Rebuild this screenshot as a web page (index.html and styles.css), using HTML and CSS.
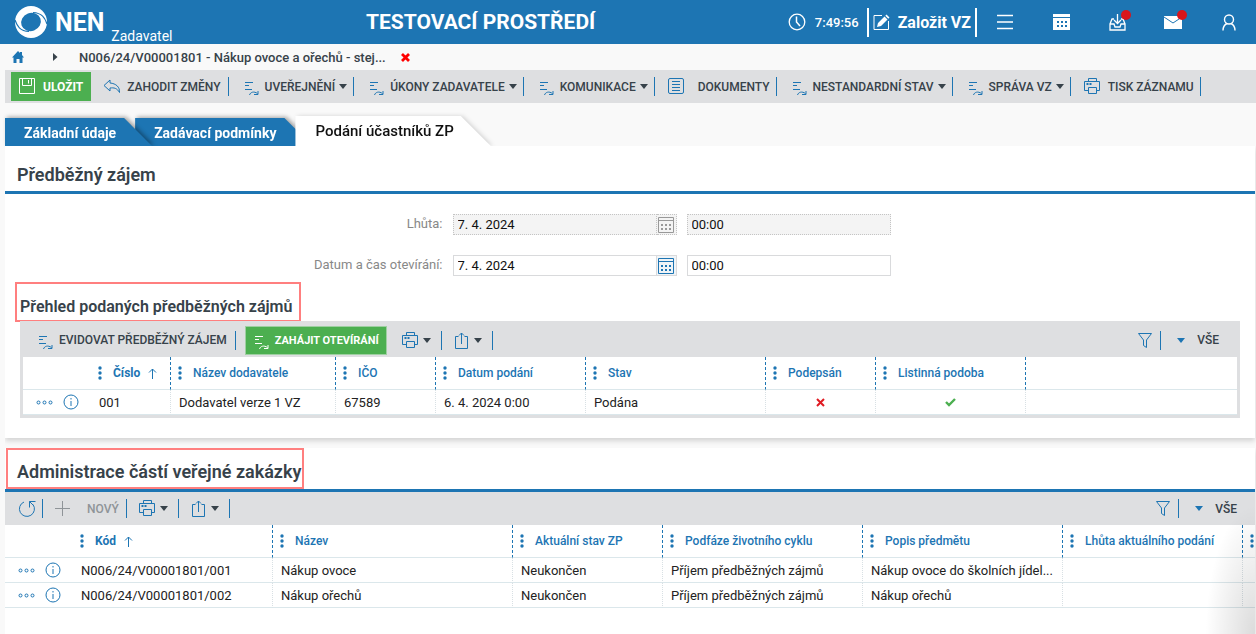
FILE: index.html
```html
<!DOCTYPE html>
<html lang="cs">
<head>
  <meta charset="UTF-8" />
  <meta name="viewport" content="width=device-width, initial-scale=1.0"/>
  <title>NEN - Podání účastníků ZP</title>
  <link rel="stylesheet" href="styles.css">
</head>
<body>
  <!-- shared icons -->
  <svg class="sprite" aria-hidden="true">
    <symbol id="i-flow" viewBox="0 0 15 15">
      <path d="M0 1.500h8M0 4.500h4M0 8.500h7M4.500 14c1-3 4.500-4 8-1.500M13 10v3.500H9"/>
    </symbol>
    <symbol id="i-print" viewBox="0 0 17 17">
      <path d="M4.500 3.500v-3h8v3M4.500 12.500H.5v-9h15v9h-3M4.500 9.500h8v6h-8z"/>
      <path d="M2.500 6h2M5.500 6h2" stroke-width="2"/>
    </symbol>
    <symbol id="i-share" viewBox="0 0 15 17">
      <path d="M4.500 4.500h-3v12h12v-12h-3M7.500 12V1M5 3.500L7.500 1 10 3.500"/>
    </symbol>
    <symbol id="i-filter" viewBox="0 0 16 17">
      <path d="M1.500 1.500h13L9.500 8v7.500l-3-2V8z"/>
    </symbol>
    <symbol id="i-cal" viewBox="0 0 16 16">
      <path d="M.5.5h15v15H.5zM.5 3.500h15"/>
      <path d="M3 8h2M7 8h2M11 8h2M3 12h2M7 12h2M11 12h2" stroke-width="2"/>
    </symbol>
    <symbol id="i-info" viewBox="0 0 16 16">
      <circle cx="8" cy="8" r="7"/>
      <path d="M8 7v5M8 4v1.500"/>
    </symbol>
    <symbol id="i-more" viewBox="0 0 17 5">
      <circle cx="2.500" cy="2.500" r="1.500"/><circle cx="8.500" cy="2.500" r="1.500"/><circle cx="14.500" cy="2.500" r="1.500"/>
    </symbol>
    <symbol id="i-up" viewBox="0 0 9 11">
      <path d="M4.500 11V1M1 4.500L4.500 1 8 4.500"/>
    </symbol>
    <symbol id="i-dots" viewBox="0 0 4 14">
      <g fill="currentColor" stroke="none"><circle cx="2" cy="2" r="1.700"/><circle cx="2" cy="7" r="1.700"/><circle cx="2" cy="12" r="1.700"/></g>
    </symbol>
  </svg>

  <header class="topbar">
    <a href="#" class="logo">
      <svg class="logo-mark" viewBox="0 0 32 32" aria-hidden="true">
        <circle cx="16" cy="16" r="16" fill="#fff"/>
        <ellipse cx="16" cy="16" rx="10" ry="9" fill="#1d75b3" transform="rotate(-20 16 16)"/>
        <path fill="none" stroke="#1d75b3" stroke-width="1.200" d="M0 14C2 20 5 25 14 25.500M32 18C30 12 27 7 18 6.500"/>
      </svg>
      <span class="logo-name">NEN</span>
      <span class="logo-role">Zadavatel</span>
    </a>
    <div class="env-name">TESTOVACÍ PROSTŘEDÍ</div>
    <div class="top-tools">
      <svg class="icon clock" width="18" height="18" viewBox="0 0 18 18" aria-hidden="true"><circle cx="9" cy="9" r="7.800" stroke-width="1.300"/><path stroke-width="1.500" d="M8.500 3.500V9l3.500 4"/></svg>
      <span class="time">7:49:56</span>
      <button class="new-vz" type="button">
        <svg class="icon" width="17" height="17" viewBox="0 0 17 17" aria-hidden="true"><path d="M9 1.500H1v14h14.500V7"/><path fill="currentColor" stroke="none" d="M4 13l1-4 6.500-6.500 3 3L8 12zM12.300 1.700L13.500.5l3 3-1.200 1.200z"/></svg>
        Založit VZ
      </button>
      <button class="top-btn" type="button" aria-label="Menu">
        <svg class="icon" width="18" height="16" viewBox="0 0 18 16"><path stroke-width="1.500" d="M1 1.500h16M1 8h16M1 14.500h16"/></svg>
      </button>
      <button class="top-btn" type="button" aria-label="Kalendář">
        <svg width="17" height="17" viewBox="0 0 17 17"><path fill="#fff" d="M0 0h17v3H0zM0 4h17v12H0z"/><path stroke="#1d75b3" stroke-width="2" stroke-dasharray="2" d="M4 8h10M4 12h10"/></svg>
      </button>
      <button class="top-btn" type="button" aria-label="Doručené">
        <svg class="icon" width="17" height="17" viewBox="0 0 17 17"><path stroke-width="1.300" d="M5 5H3L1 10v6h15v-6l-2-5h-2M1 10h4l1 3h5l1-3h4M8.500 0v9M5 6l3.500 3.500L12 6"/></svg>
        <span class="badge"></span>
      </button>
      <button class="top-btn" type="button" aria-label="Zprávy">
        <svg width="18" height="14" viewBox="0 0 18 14"><path fill="#fff" d="M0 1h18v13H0z"/><path fill="none" stroke="#1d75b3" d="M0 2l9 6 9-6"/></svg>
        <span class="badge"></span>
      </button>
      <button class="top-btn" type="button" aria-label="Uživatel">
        <svg class="icon" width="14" height="17" viewBox="0 0 14 17"><circle cx="7" cy="5.500" r="4.500" stroke-width="1.400"/><path stroke-width="1.400" d="M1 16.500c0-4 2-6 4-7M13 16.500c0-4-2-6-4-7"/></svg>
      </button>
    </div>
  </header>

  <nav class="breadcrumb">
    <a href="#" class="home" aria-label="Domů"><svg width="12" height="12" viewBox="0 0 12 12"><path fill="#1d75b3" d="M6 0l2 2V1h2v3l2 2.500h-1.500V12h-3V8h-3v4h-3V6.500H0z"/></svg></a>
    <svg class="crumb-arrow" width="6" height="8" viewBox="0 0 6 8" aria-hidden="true"><path fill="#37424a" d="M1 0l4.500 4L1 8z"/></svg>
    <a href="#" class="crumb">N006/24/V00001801 - Nákup ovoce a ořechů - stej...</a>
    <button class="crumb-close" type="button" aria-label="Zavřít"><svg width="9" height="9" viewBox="0 0 9 9"><path stroke="#f00" stroke-width="2.800" d="M1 1l7 7M8 1L1 8"/></svg></button>
  </nav>

  <div class="toolbar main-toolbar">
    <button class="save" type="button">
      <svg class="icon" width="18" height="17" viewBox="0 0 18 17" aria-hidden="true"><path d="M1.500.5v15h15V.5zM4.500.5v7h9v-7M10.500 2v3.500"/></svg>
      ULOŽIT
    </button>
    <button class="tool undo" type="button">
      <svg class="icon" width="18" height="15" viewBox="0 0 18 15" aria-hidden="true"><path d="M7 1L1 6.500 7 12V9c4-.5 7 0 9.500 4.500C17 8 13 4.500 7 4z"/></svg>
      ZAHODIT ZMĚNY
    </button>
    <button class="tool" type="button"><svg class="icon flow"><use href="#i-flow"/></svg>UVEŘEJNĚNÍ<span class="caret"></span></button>
    <button class="tool" type="button"><svg class="icon flow"><use href="#i-flow"/></svg>ÚKONY ZADAVATELE<span class="caret"></span></button>
    <button class="tool" type="button"><svg class="icon flow"><use href="#i-flow"/></svg>KOMUNIKACE<span class="caret"></span></button>
    <button class="tool docs" type="button">
      <svg class="icon" width="17" height="17" viewBox="0 0 17 17" aria-hidden="true"><rect x=".5" y=".5" width="15" height="15" rx="1.500"/><path d="M4 3.500h8M4 6.500h8M4 9.500h8M4 12.500h8"/></svg>
      DOKUMENTY
    </button>
    <button class="tool" type="button"><svg class="icon flow"><use href="#i-flow"/></svg>NESTANDARDNÍ STAV<span class="caret"></span></button>
    <button class="tool" type="button"><svg class="icon flow"><use href="#i-flow"/></svg>SPRÁVA VZ<span class="caret"></span></button>
    <button class="tool print" type="button"><svg class="icon printer"><use href="#i-print"/></svg>TISK ZÁZNAMU</button>
  </div>

  <nav class="tabs">
    <div class="tab"><a href="#">Základní údaje</a></div>
    <div class="tab tab-second"><a href="#">Zadávací podmínky</a></div>
    <div class="tab active"><a href="#">Podání účastníků ZP</a></div>
  </nav>

  <main>
    <section class="panel">
      <h2>Předběžný zájem</h2>
      <form class="dates">
        <div class="form-row">
          <label for="deadline">Lhůta:</label>
          <div class="date-box disabled">
            <input type="text" id="deadline" value="7. 4. 2024" disabled>
            <button type="button" aria-label="Kalendář" disabled><svg class="icon cal"><use href="#i-cal"/></svg></button>
          </div>
          <input class="time-box" type="text" value="00:00" aria-label="Lhůta - čas" disabled>
        </div>
        <div class="form-row">
          <label for="opening">Datum a čas otevírání:</label>
          <div class="date-box">
            <input type="text" id="opening" value="7. 4. 2024">
            <button type="button" aria-label="Kalendář"><svg class="icon cal"><use href="#i-cal"/></svg></button>
          </div>
          <input class="time-box" type="text" value="00:00" aria-label="Otevírání - čas">
        </div>
      </form>

      <h3 class="marked">Přehled podaných předběžných zájmů</h3>
      <div class="grid-box">
        <div class="toolbar">
          <button class="tool evidence" type="button"><svg class="icon flow"><use href="#i-flow"/></svg>EVIDOVAT PŘEDBĚŽNÝ ZÁJEM</button>
          <button class="start" type="button"><svg class="icon flow"><use href="#i-flow"/></svg>ZAHÁJIT OTEVÍRÁNÍ</button>
          <button class="tool small" type="button" aria-label="Tisk"><svg class="icon printer"><use href="#i-print"/></svg><span class="caret"></span></button>
          <button class="tool small" type="button" aria-label="Export"><svg class="icon share"><use href="#i-share"/></svg><span class="caret"></span></button>
          <div class="view">
            <button class="tool filter" type="button" aria-label="Filtr"><svg class="icon funnel"><use href="#i-filter"/></svg></button>
            <button class="all" type="button"><span class="caret"></span>VŠE</button>
          </div>
        </div>
        <div class="table-wrap">
          <table>
            <colgroup><col class="w-act"><col class="w80"><col class="w165"><col class="w100"><col class="w150"><col class="w180"><col class="w110"><col class="w150"><col></colgroup>
            <thead>
              <tr>
                <th class="plain"></th>
                <th class="sorted"><svg class="icon dots"><use href="#i-dots"/></svg>Číslo<svg class="icon up"><use href="#i-up"/></svg></th>
                <th><svg class="icon dots"><use href="#i-dots"/></svg>Název dodavatele</th>
                <th><svg class="icon dots"><use href="#i-dots"/></svg>IČO</th>
                <th><svg class="icon dots"><use href="#i-dots"/></svg>Datum podání</th>
                <th><svg class="icon dots"><use href="#i-dots"/></svg>Stav</th>
                <th><svg class="icon dots"><use href="#i-dots"/></svg>Podepsán</th>
                <th><svg class="icon dots"><use href="#i-dots"/></svg>Listinná podoba</th>
                <th class="plain"></th>
              </tr>
            </thead>
            <tbody>
              <tr>
                <td class="plain actions"><svg class="icon more"><use href="#i-more"/></svg><svg class="icon info"><use href="#i-info"/></svg></td>
                <td>001</td>
                <td>Dodavatel verze 1 VZ</td>
                <td>67589</td>
                <td>6. 4. 2024 0:00</td>
                <td>Podána</td>
                <td class="mark"><svg width="9" height="9" viewBox="0 0 9 9" role="img" aria-label="Ne"><path stroke="#e01b22" stroke-width="2" d="M1 1l7 7M8 1L1 8"/></svg></td>
                <td class="mark"><svg width="11" height="9" viewBox="0 0 11 9" role="img" aria-label="Ano"><path fill="none" stroke="#4caf50" stroke-width="2.400" d="M1 4l3 3 6-6"/></svg></td>
                <td class="plain"></td>
              </tr>
            </tbody>
          </table>
        </div>
      </div>
    </section>

    <section class="panel parts">
      <h2><span class="marked">Administrace částí veřejné zakázky</span></h2>
      <div class="toolbar">
        <button class="tool refresh" type="button" aria-label="Obnovit"><svg class="icon" width="18" height="18" viewBox="0 0 18 18"><path d="M6 2a7.500 7.500 0 1 0 9 2.500"/><path d="M11.500 7.500v-6h6M11.500 1.500l4 4"/></svg></button>
        <button class="tool new" type="button" disabled><svg class="icon" width="15" height="15" viewBox="0 0 15 15" aria-hidden="true"><path d="M7.500 0v15M0 7.500h15"/></svg>NOVÝ</button>
        <button class="tool small" type="button" aria-label="Tisk"><svg class="icon printer"><use href="#i-print"/></svg><span class="caret"></span></button>
        <button class="tool small" type="button" aria-label="Export"><svg class="icon share"><use href="#i-share"/></svg><span class="caret"></span></button>
        <div class="view">
          <button class="tool filter" type="button" aria-label="Filtr"><svg class="icon funnel"><use href="#i-filter"/></svg></button>
          <button class="all" type="button"><span class="caret"></span>VŠE</button>
        </div>
      </div>
      <div class="table-wrap">
        <table class="wide">
          <colgroup><col class="w-act"><col class="w200"><col class="w240"><col class="w150"><col class="w200"><col class="w200"><col class="w180"><col class="w150"></colgroup>
          <thead>
            <tr>
              <th class="plain"></th>
              <th class="sorted"><svg class="icon dots"><use href="#i-dots"/></svg>Kód<svg class="icon up"><use href="#i-up"/></svg></th>
              <th><svg class="icon dots"><use href="#i-dots"/></svg>Název</th>
              <th><svg class="icon dots"><use href="#i-dots"/></svg>Aktuální stav ZP</th>
              <th><svg class="icon dots"><use href="#i-dots"/></svg>Podfáze životního cyklu</th>
              <th><svg class="icon dots"><use href="#i-dots"/></svg>Popis předmětu</th>
              <th><svg class="icon dots"><use href="#i-dots"/></svg>Lhůta aktuálního podání</th>
              <th><svg class="icon dots"><use href="#i-dots"/></svg></th>
            </tr>
          </thead>
          <tbody>
            <tr>
              <td class="plain actions"><svg class="icon more"><use href="#i-more"/></svg><svg class="icon info"><use href="#i-info"/></svg></td>
              <td>N006/24/V00001801/001</td>
              <td>Nákup ovoce</td>
              <td>Neukončen</td>
              <td>Příjem předběžných zájmů</td>
              <td>Nákup ovoce do školních jídel...</td>
              <td></td>
              <td></td>
            </tr>
            <tr>
              <td class="plain actions"><svg class="icon more"><use href="#i-more"/></svg><svg class="icon info"><use href="#i-info"/></svg></td>
              <td>N006/24/V00001801/002</td>
              <td>Nákup ořechů</td>
              <td>Neukončen</td>
              <td>Příjem předběžných zájmů</td>
              <td>Nákup ořechů</td>
              <td></td>
              <td></td>
            </tr>
          </tbody>
        </table>
      </div>
    </section>
  </main>
</body>
</html>
```
FILE: styles.css
```css
* {
  box-sizing: border-box;
}

body {
  font-family: Roboto, sans-serif;
  font-size: 13px;
  color: #222;
  background: #f9f9f9;
  margin: 0;
  min-height: 100vh;
  display: flex;
  flex-direction: column;
  overflow: hidden;
}

a {
  color: inherit;
  text-decoration: none;
}

button {
  font: inherit;
  color: inherit;
  background: none;
  border: none;
  padding: 0;
  cursor: pointer;
}

svg {
  display: block;
  flex: none;
}

.sprite {
  position: absolute;
  width: 0;
  height: 0;
}

.icon {
  fill: none;
  stroke: currentColor;
}

.flow { width: 15px; height: 15px; }
.printer { width: 17px; height: 17px; }
.share { width: 15px; height: 17px; }
.funnel { width: 16px; height: 17px; }
.cal { width: 16px; height: 16px; }
.info { width: 16px; height: 16px; }
.more { width: 17px; height: 5px; }
.up { width: 9px; height: 11px; }
.dots { width: 4px; height: 14px; }

.caret {
  border: 4px solid transparent;
  border-top: 5px solid #37424a;
  border-bottom: 0;
}

/* top bar */
.topbar {
  height: 44px;
  background: #1d75b3;
  color: #fff;
  display: flex;
  align-items: center;
  padding-left: 15px;
}

.logo {
  display: flex;
  align-items: center;
  width: 351px;
}

.logo-mark {
  width: 32px;
  height: 32px;
}

.logo-name {
  font-size: 25px;
  font-weight: 700;
  margin-left: 8px;
}

.logo-role {
  font-size: 14px;
  align-self: flex-end;
  line-height: 4px;
  margin-left: 7px;
}

.env-name {
  font-size: 21px;
  font-weight: 700;
}

.top-tools {
  margin-left: auto;
  margin-right: -1px;
  display: flex;
  align-items: center;
}

.time {
  font-weight: 500;
  margin: 0 8px 0 9px;
}

.new-vz {
  display: flex;
  align-items: center;
  gap: 8px;
  height: 29px;
  padding: 0 4px;
  border: solid #fff;
  border-width: 0 2px;
  font-size: 16px;
  font-weight: 700;
}

.top-btn {
  width: 56px;
  height: 44px;
  display: flex;
  align-items: center;
  justify-content: center;
  position: relative;
}

.badge {
  position: absolute;
  top: 10px;
  right: 14px;
  width: 10px;
  height: 10px;
  border-radius: 50%;
  background: #d8151b;
}

/* breadcrumb */
.breadcrumb {
  height: 26px;
  display: flex;
  align-items: center;
  padding-left: 12px;
  color: #37424a;
  font-weight: 500;
}

.crumb-arrow {
  margin-left: 28px;
}

.crumb {
  margin-left: 21px;
}

.crumb-close {
  margin-left: 15px;
}

/* toolbars */
.toolbar {
  display: flex;
  align-items: center;
  background: #dedfe1;
  color: #37424a;
  font-size: 12px;
  font-weight: 500;
}

.main-toolbar {
  height: 33px;
  margin-left: 5px;
  padding-left: 6px;
}

.tool {
  display: flex;
  align-items: center;
  height: 19px;
  padding: 0 6px 0 16px;
  border-right: 1px solid #1d75b3;
}

.tool .icon {
  color: #1d75b3;
  margin-right: 5px;
}

.tool .caret {
  margin-left: 4px;
}

.flow {
  margin-top: 4px;
}

.save,
.start {
  display: flex;
  align-items: center;
  background: #4caf50;
  color: #fff;
  font-weight: 700;
}

.save {
  height: 29px;
  gap: 7px;
  padding: 0 8px 0 7px;
}

.undo {
  padding: 0 7px 0 12px;
}

.undo .icon {
  margin-right: 6px;
}

.docs,
.print {
  padding-left: 13px;
}

.docs .icon {
  margin-right: 13px;
}

.print .icon {
  margin-right: 7px;
}

/* tabs */
.tabs {
  display: flex;
  align-items: flex-end;
  height: 43px;
  padding-left: 5px;
}

.tab {
  position: relative;
  z-index: 2;
  filter: drop-shadow(2px -1px 2px rgba(0, 0, 0, 0.35));
}

.tab a {
  display: flex;
  align-items: center;
  height: 28px;
  padding: 2px 36px 0 19px;
  background: #1d75b3;
  color: #fff;
  font-size: 14px;
  font-weight: 700;
  clip-path: polygon(0 0, calc(100% - 28px) 0, 100% 100%, 0 100%);
}

.tab-second {
  z-index: 1;
  margin-left: -17px;
}

.tab.active {
  z-index: 3;
  margin-left: -17px;
  filter: drop-shadow(2px 0 2px rgba(0, 0, 0, 0.15));
}

.tab.active a {
  height: 30px;
  padding: 0 37px 0 20px;
  background: #fff;
  color: #111;
  font-size: 15px;
  font-weight: 500;
  clip-path: polygon(0 0, calc(100% - 30px) 0, 100% 100%, 0 100%);
}

/* panels */
main {
  flex: 1;
  display: flex;
  flex-direction: column;
  gap: 10px;
  position: relative;
  z-index: 4;
}

.panel {
  margin-left: 5px;
  margin-right: 1px;
  background: #fff;
  padding-bottom: 20px;
  box-shadow: 0 3px 5px rgba(0, 0, 0, 0.15);
  clip-path: inset(0 -1px -10px 0);
}

h2 {
  display: flex;
  align-items: center;
  height: 48px;
  margin: 0;
  padding: 12px 12px 0;
  border-bottom: 3px solid #1d75b3;
  color: #37424a;
  font-size: 18px;
  font-weight: 600;
}

.marked {
  border: 2px solid #ff7f7f;
}

.dates {
  display: flex;
  flex-direction: column;
  gap: 20px;
  padding-top: 20px;
}

.form-row {
  display: flex;
  gap: 10px;
  height: 21px;
}

.form-row label {
  width: 35%;
  text-align: right;
  line-height: 19px;
  color: #888;
}

.form-row input {
  font: inherit;
  color: #111;
  min-width: 0;
  padding: 0 4px;
  border: 1px solid #d9dadc;
  border-radius: 0;
  background: #fff;
}

.form-row input:disabled {
  background: #f4f4f4;
  border: 1px dotted #c4c4c4;
}

.date-box {
  display: flex;
  width: 224px;
}

.date-box input {
  flex: 1;
}

.date-box button {
  width: 20px;
  padding: 1px;
  border: 1px solid #d9dadc;
  border-left: 0;
  background: #f0f4f7;
  color: #1d75b3;
}

.date-box.disabled button {
  border: 1px dotted #c4c4c4;
  border-left: 0;
  background: #f4f4f4;
  color: #999;
}

.time-box {
  width: 204px;
}

h3 {
  width: fit-content;
  height: 40px;
  margin: 6px 0 0 10px;
  padding: 11px 7px 0 3px;
  color: #37424a;
  font-size: 16px;
  font-weight: 600;
  line-height: 24px;
}

/* tables */
.grid-box {
  margin: -1px 15px 0;
  background: #dedfe1;
  padding: 0 3px 3px;
}

.grid-box .toolbar {
  height: 36px;
  padding-top: 2px;
}

.evidence {
  padding-right: 8px;
}

.start {
  height: 27px;
  margin: 0 4px 0 10px;
  padding: 0 7px 0 9px;
  gap: 5px;
  outline: 1px solid #9fcfa2;
  font-size: 11px;
}

.tool.small {
  padding: 0 10px 0 12px;
}

.tool.small .icon {
  margin-right: 0;
}

.tool.small .share {
  margin-right: 1px;
}

.view {
  margin-left: auto;
  display: flex;
  align-items: center;
}

.tool.filter {
  padding: 0 7px 0 0;
}

.filter .icon {
  margin-right: 0;
}

.all {
  display: flex;
  align-items: center;
  gap: 12px;
  padding: 0 18px 0 16px;
}

.all .caret {
  border-top-color: #1d75b3;
}

.table-wrap {
  overflow: hidden;
  background: #fff;
}

table {
  width: 100%;
  table-layout: fixed;
  border-collapse: separate;
  border-spacing: 0;
}

table.wide {
  width: 1388px;
}

.w-act { width: 68px; }
.w80 { width: 80px; }
.w100 { width: 100px; }
.w110 { width: 110px; }
.w150 { width: 150px; }
.w165 { width: 165px; }
.w180 { width: 180px; }
.w200 { width: 200px; }
.w240 { width: 240px; }

th {
  height: 33px;
  padding: 0 0 0 7px;
  border-bottom: 1px solid #dbe7eb;
  border-right: 1px dashed #1d75b3;
  text-align: left;
  font-size: 12px;
  font-weight: 500;
  color: #1d75b3;
  white-space: nowrap;
}

th.sorted {
  font-weight: 700;
}

th svg {
  display: inline-block;
  vertical-align: middle;
}

th .dots {
  margin-right: 11px;
}

th .up {
  margin-left: 8px;
}

td {
  height: 25px;
  padding: 0 8px;
  border-bottom: 1px solid #dbe7eb;
  border-right: 1px dotted #d8e0e4;
  white-space: nowrap;
}

th.plain,
td.plain {
  border-right: 0;
}

td.actions {
  padding: 0 0 0 13px;
}

.actions svg {
  display: inline-block;
  vertical-align: middle;
  color: #1d75b3;
}

.actions .info {
  margin-left: 10px;
}

.mark svg {
  margin: 0 auto;
}

/* parts */
.parts {
  flex: 1;
  padding-bottom: 0;
  position: relative;
}

.parts h2 {
  height: 44px;
  padding: 0 1px;
}

.parts .marked {
  height: 41px;
  padding: 11px 1px 0 9px;
}

.parts .toolbar {
  height: 33px;
  padding-left: 13px;
}

.tool.refresh {
  padding: 0 6px 0 0;
}

.refresh .icon {
  margin-right: 0;
}

.tool.new {
  padding: 0 7px 0 12px;
  color: #8f9498;
}

.tool.new .icon {
  color: #8f9498;
  margin-right: 17px;
}

/* soft shade in the bottom right corner */
.parts::after {
  content: "";
  position: absolute;
  right: 0;
  bottom: 0;
  width: 50px;
  height: 130px;
  background: radial-gradient(ellipse at right bottom, rgba(0, 0, 0, 0.14), transparent 70%);
  pointer-events: none;
}
```
